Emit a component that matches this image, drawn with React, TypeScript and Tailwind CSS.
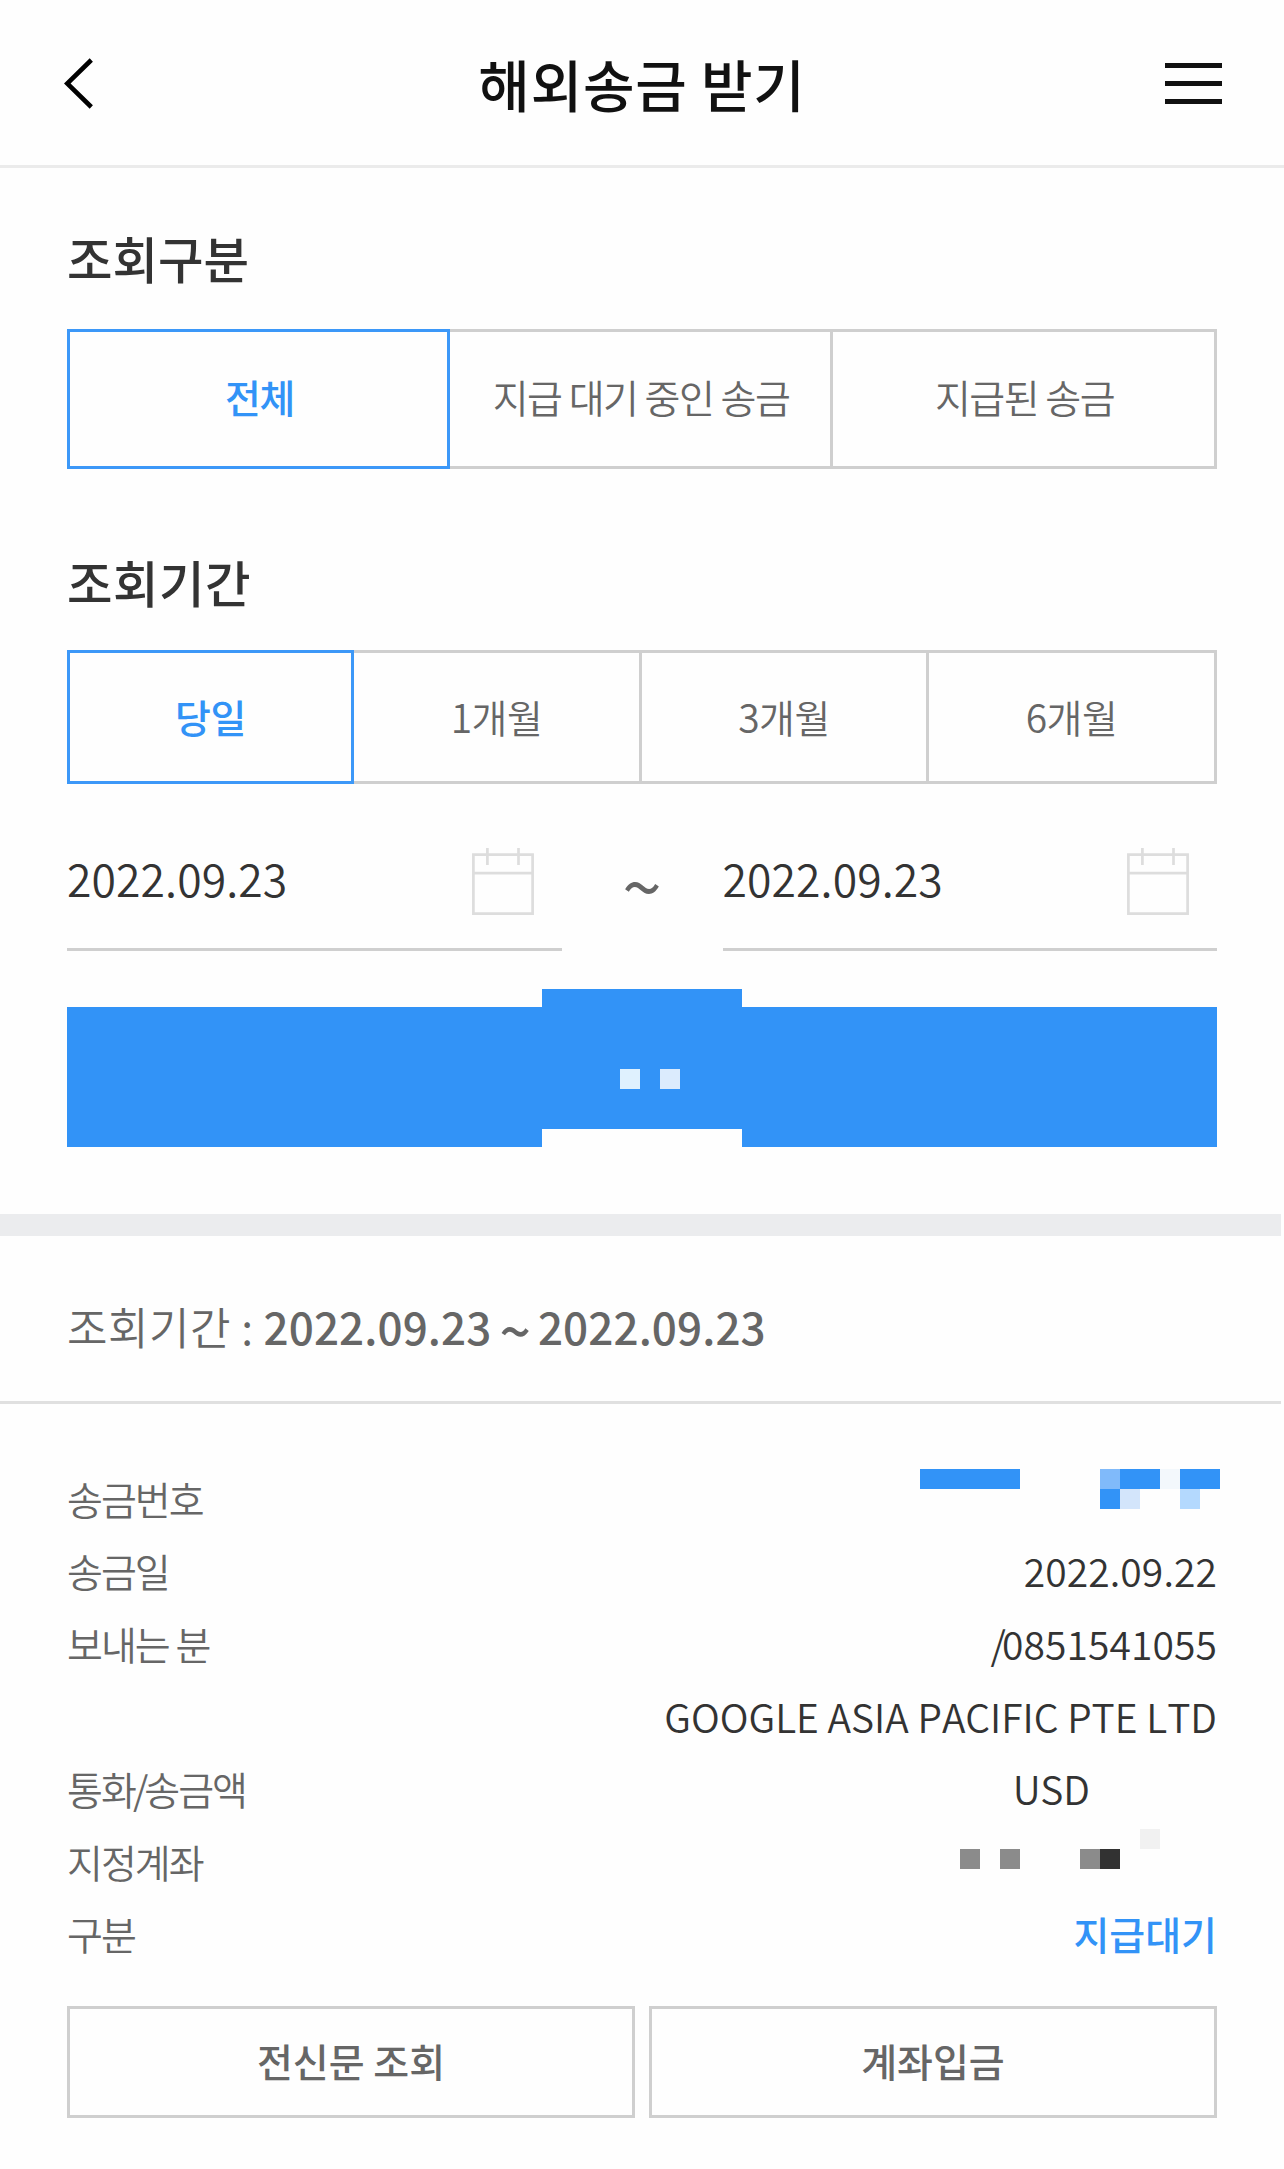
import { useState } from 'react'
import clsx from 'clsx'

const remittanceTypes = ['전체', '지급 대기 중인 송금', '지급된 송금']
const periods = ['당일', '1개월', '3개월', '6개월']

// masked values are drawn as rows of 20px cells, null = empty cell
const B = 'bg-[#3293f7]'
const maskedNumber = [
  [B, B, B, B, B, null, null, null, null, 'bg-[#80bafa]', B, B, 'bg-[#f3f8fc]', B, B],
  [null, null, null, null, null, null, null, null, null, B, 'bg-[#d3e5fb]', null, null, 'bg-[#b4d9fe]', null],
]
const maskedAccount = [
  [null, null, null, null, null, null, null, null, null, 'bg-[#f1f1f1]'],
  ['bg-[#8b8b8b]', null, 'bg-[#8b8b8b]', null, null, null, 'bg-[#8b8b8b]', 'bg-[#323232]', null, null],
]

function Mosaic({ rows, className }: { rows: (string | null)[][]; className?: string }) {
  return (
    <div className={clsx('self-start', className)}>
      {rows.map((row, y) => (
        <div key={y} className="flex">
          {row.map((cell, x) => (
            <span key={x} className={clsx('size-5', cell)} />
          ))}
        </div>
      ))}
    </div>
  )
}

interface TabsProps {
  items: string[]
  className: string
}

function Tabs({ items, className }: TabsProps) {
  const [active, setActive] = useState(0)

  return (
    <div className={clsx('grid', className)}>
      {items.map((item, i) => (
        <button
          key={item}
          onClick={() => setActive(i)}
          className={clsx(
            'border-y-[3px] border-r-[3px] text-[39px] whitespace-nowrap',
            i === active
              ? 'border-l-[3px] border-[#3c98f8] font-medium text-[#3293f7]'
              : 'border-[#cfcfcf] text-[#666]'
          )}
        >
          {item}
        </button>
      ))}
    </div>
  )
}

function CalendarIcon() {
  return (
    <svg width="62" height="67" viewBox="0 0 62 67" fill="none" stroke="#ddd" strokeWidth="2.7">
      <path d="M1.4 6.7h59.2v58.9H1.4zM1.4 25.2h59.2M15.4 0v17M46.5 0v17" />
    </svg>
  )
}

function DateField({ value }: { value: string }) {
  return (
    <div className="flex h-[143px] w-[494.5px] items-center justify-between border-b-[3px] border-[#cfcfcf] pr-[28px]">
      <span className="text-[44.5px] tracking-[0.1px] text-[#333]">{value}</span>
      <span className="mt-[7px]">
        <CalendarIcon />
      </span>
    </div>
  )
}

function Row({ label, children }: { label?: React.ReactNode; children: React.ReactNode }) {
  return (
    <div className="flex h-[72.6px] items-center justify-between text-[39px]">
      <span className="tracking-[-0.05em] text-[#666]">{label}</span>
      {children}
    </div>
  )
}

export default function App() {
  return (
    <div className="min-h-[2169px] w-[1284px] bg-[#fefefe] font-['Noto_Sans_CJK_KR',sans-serif] leading-none font-[350]">
      <header className="flex h-[168px] items-center justify-between border-b-[3px] border-[#ebebeb] pr-[62px] pl-[64px]">
        <button aria-label="뒤로" className="mt-[2px]">
          <svg width="57" height="51" viewBox="0 0 57 51" fill="none" stroke="#000" strokeWidth="4.6">
            <path d="M27.3 2 3.2 25.5 27.3 49" />
          </svg>
        </button>
        <h1 className="mr-[2px] text-[56px] font-medium tracking-[0.8px] text-[#111]">해외송금 받기</h1>
        <button aria-label="메뉴" className="mt-[2px] flex w-[57px] flex-col gap-[13px]">
          <span className="h-[5px] bg-[#111]" />
          <span className="h-[5px] bg-[#111]" />
          <span className="h-[5px] bg-[#111]" />
        </button>
      </header>

      <section className="px-[67px] pt-[60px]">
        <h2 className="h-[60px] text-[49.5px] leading-[60px] font-medium text-[#333]">조회구분</h2>
        <Tabs
          items={remittanceTypes}
          className="mt-[41px] h-[140px] grid-cols-[383px_383px_384px] tracking-[-1.5px] *:pb-[6px] *:pl-[2px]"
        />

        <h2 className="mt-[83px] h-[60px] text-[49.5px] leading-[60px] font-medium tracking-[0.5px] text-[#333]">
          조회기간
        </h2>
        <Tabs
          items={periods}
          className="mt-[38px] h-[134px] grid-cols-[287px_288px_287px_288px] tracking-[-0.5px] *:pb-[1px]"
        />

        <div className="mt-[24px] flex items-center justify-between">
          <DateField value="2022.09.23" />
          <span className="h-[60px] text-[71px] leading-[66px] font-normal text-[#666]">~</span>
          <DateField value="2022.09.23" />
        </div>

        <div className="mt-[56px] flex h-[140px] justify-center bg-[#3293f7]">
          <div className="-mt-[18px] h-[158px] w-[200px] border-b-[18px] border-[#fefefe] bg-[#3293f7]">
            <div className="flex gap-5 pt-20 pl-[78px]">
              <span className="size-5 bg-[#dff1fe]" />
              <span className="size-5 bg-[#dbebfd]" />
            </div>
          </div>
        </div>
      </section>

      <div className="mt-[67px] h-[22px] w-[1281px] bg-[#ebecee]" />

      <div className="flex h-[168px] w-[1281px] items-center border-b-[3px] border-[#e0e0e0] px-[67px] pt-[15px] text-[44px] text-[#666]">
        <span className="tracking-[0.5px]">조회기간 :</span>
        <b className="ml-[10px] flex items-center font-medium tracking-[0.1px]">
          2022.09.23
          <span className="mt-[4px] mr-[7px] ml-[8px] text-[55px]">~</span>
          2022.09.23
        </b>
      </div>

      <section className="px-[67px] pt-[58px] text-[#333]">
        <Row label="송금번호">
          <Mosaic rows={maskedNumber} className="mt-[7px] -mr-[3px]" />
        </Row>
        <Row label="송금일">
          <span className="tracking-[0.1px]">2022.09.22</span>
        </Row>
        <Row label="보내는 분">
          <span className="tracking-[0.1px]">
            <span className="-mr-[4px]">/</span>0851541055
          </span>
        </Row>
        <Row>
          <span className="[font-kerning:none]">GOOGLE ASIA PACIFIC PTE LTD</span>
        </Row>
        <Row
          label={
            <>
              통화<span className="-mx-[2px]">/</span>송금액
            </>
          }
        >
          <span className="mr-[127px]">USD</span>
        </Row>
        <Row label="지정계좌">
          <Mosaic rows={maskedAccount} className="mt-[4px] mr-[57px]" />
        </Row>
        <Row label="구분">
          <span className="font-medium text-[#3293f7]">지급대기</span>
        </Row>

        <div className="mt-[36px] grid grid-cols-2 gap-[14px] text-[39px] font-medium text-[#666] *:pb-[3px]">
          <button className="h-[112px] border-[3px] border-[#cfcfcf]">전신문 조회</button>
          <button className="h-[112px] border-[3px] border-[#cfcfcf]">계좌입금</button>
        </div>
      </section>
    </div>
  )
}
